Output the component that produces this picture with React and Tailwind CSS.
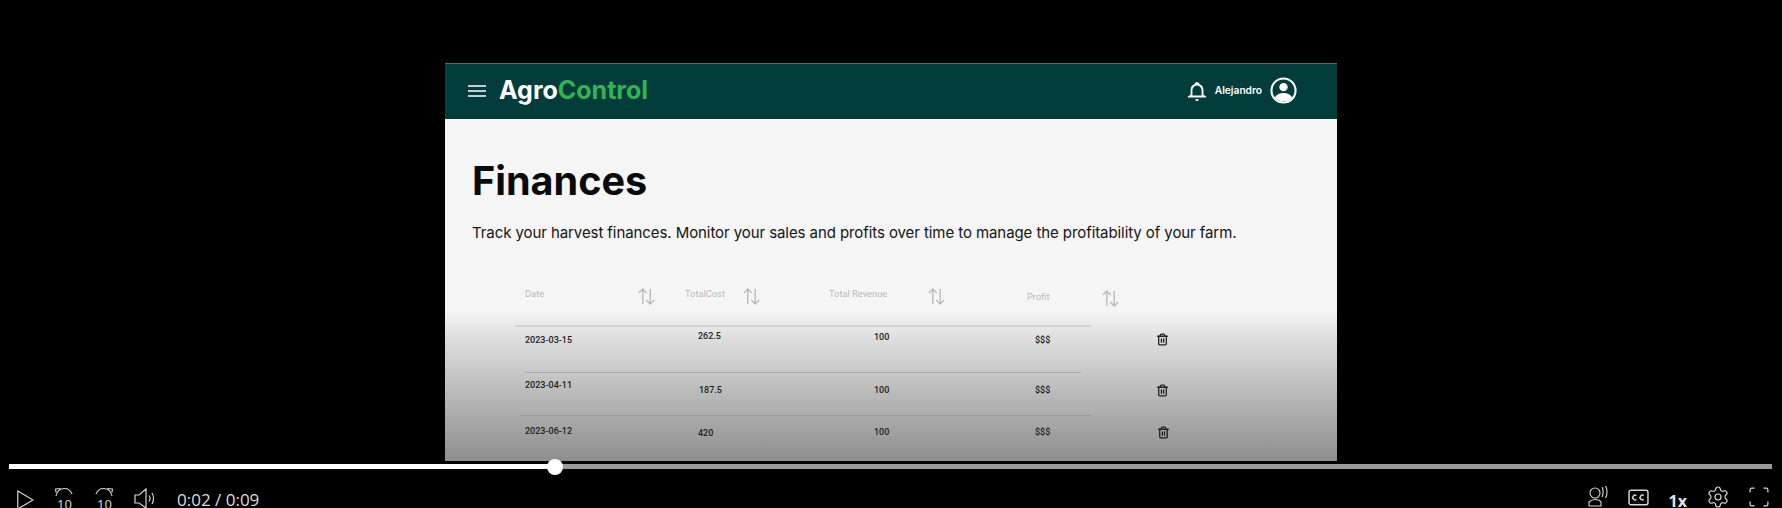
import React from "react";
import { Settings, Trash2 } from "lucide-react";

const Sort = ({ className = "" }) => (
  <svg viewBox="0 0 16 16" className={`w-[17px] h-[17px] shrink-0 text-[#b9b9b9] ${className}`} fill="none" stroke="currentColor" strokeWidth="1.3">
    <path d="M4.500 15V1M.8 4.800 4.500 1l3.700 3.800M11.500 1v14M7.800 11.200l3.700 3.800 3.700-3.800" />
  </svg>
);

const Trash = ({ className = "" }) => (
  <Trash2 className={`w-[13px] h-[15px] text-[#222] ${className}`} strokeWidth={2.4} />
);

const Cell = ({ className, children }) => (
  <div className={`text-[9px] leading-3 font-medium text-[#202020] shrink-0 [font-family:Roboto,sans-serif] ${className}`}>{children}</div>
);

const Replay = ({ flip }) => (
  <div className="relative w-[20px] h-[26px] shrink-0 text-[#cfcfcf]">
    <svg viewBox="0 0 20 12" className={`w-5 h-3 ${flip ? "-scale-x-100" : ""}`} fill="none" stroke="currentColor" strokeWidth="1.2">
      <path d="M2 9C3 3.500 7 1.500 10.500 1.500c3.500 0 6 2 7.500 5.500M1.500 1.500 2 5.500M1.500 2l5-.5" />
    </svg>
    <span className="absolute left-[3px] top-[8px] text-[13px] leading-[18px] [font-family:'Noto_Sans',sans-serif]">10</span>
  </div>
);

export default function App() {
  return (
    <div className="h-[508px] w-full overflow-hidden bg-black [font-family:Inter,sans-serif]">
      <div className="pt-[63px] pl-[445px]">
        <div className="w-[892px] h-[398px] flex flex-col">
          <header className="h-[56px] shrink-0 bg-[#033d3b] border-t border-[#4d6f6c] flex items-center pl-[23px] pr-[40px] pb-[2px] text-white">
            <svg viewBox="0 0 18 14" className="w-[18px] h-[14px]" fill="none" stroke="currentColor" strokeWidth="1.7">
              <path d="M0 2h18M0 7h18M0 12h18" />
            </svg>
            <div className="ml-[13px] text-[25px] font-bold leading-none">
              Agro<span className="text-[#35b256]">Control</span>
            </div>
            <svg viewBox="0 0 24 24" className="ml-auto w-[22px] h-[22px]" fill="currentColor">
              <path d="M12 23c1.100 0 2-.9 2-2h-4c0 1.100.9 2 2 2zm7-7v-5c0-3.070-1.630-5.640-4.500-6.320V4c0-.83-1.170-1.500-2.500-1.500S9.500 3.170 9.500 4v.68C6.640 5.360 5 7.920 5 11v5l-3 2v1h20v-1l-3-2zm-2 1H7v-6c0-2.480 2.510-5 5-5s5 2.520 5 5v6z" />
            </svg>
            <div className="ml-[7px] text-[10.200px] font-semibold">Alejandro</div>
            <svg viewBox="0 0 28 28" className="ml-[8px] w-[27px] h-[27px]">
              <circle cx="14" cy="14" r="12.500" fill="#033d3b" stroke="#fff" strokeWidth="2.200" />
              <circle cx="14" cy="10.500" r="4.300" fill="#fff" />
              <path d="M5 21c2-3 5-4.500 9-4.500s7 1.500 9 4.500c-2.200 3-5.500 4.500-9 4.500S7.200 24 5 21z" fill="#fff" />
            </svg>
          </header>
          <main className="flex-1 min-h-0 overflow-hidden bg-[linear-gradient(#f5f5f5_0%,#f5f5f5_56%,#dcdcdc_65%,#8e8e8e_100%)] text-black">
            <h1 className="ml-[27px] mt-[36px] text-[39.600px] leading-[52px] font-bold text-[#0a0a0a]">Finances</h1>
            <p className="ml-[27px] mt-[14px] text-[15px] leading-6 text-[#141414] tracking-[-0.08px]">
              Track your harvest finances. Monitor your sales and profits over time to manage the profitability of your farm.
            </p>
            <div className="ml-[70px] mt-[32px] w-[576px] h-[50px] border-b-2 border-[#d2d2d2] flex items-start text-[9.300px] leading-3 text-[#b9b9b9] [font-family:Roboto,sans-serif]">
              <span className="ml-[10px] mt-[11px] w-[113px] shrink-0">Date</span>
              <Sort className="mt-[11px]" />
              <span className="ml-[30px] mt-[11px] w-[58px] shrink-0">TotalCost</span>
              <Sort className="mt-[11px]" />
              <span className="ml-[69px] mt-[11px] w-[99px] shrink-0">Total Revenue</span>
              <Sort className="mt-[11px]" />
              <span className="ml-[82px] mt-[14px] w-[75px] shrink-0">Profit</span>
              <Sort className="mt-[13px]" />
            </div>
            <div className="ml-[80px] w-[556px] h-[46px] border-b border-[#ababab] flex items-start">
              <Cell className="w-[173px] mt-[7px]">2023-03-15</Cell>
              <Cell className="w-[176px] mt-[3px]">262.5</Cell>
              <Cell className="w-[161px] mt-[4px]">100</Cell>
              <Cell className="w-[121px] mt-[7px]">$$$</Cell>
              <Trash className="shrink-0 mt-[5px]" />
            </div>
            <div className="ml-[75px] w-[571px] h-[43px] border-b border-[#999] flex items-start pl-[5px]">
              <Cell className="w-[174px] mt-[6px]">2023-04-11</Cell>
              <Cell className="w-[175px] mt-[11px]">187.5</Cell>
              <Cell className="w-[161px] mt-[11px]">100</Cell>
              <Cell className="w-[121px] mt-[11px]">$$$</Cell>
              <Trash className="shrink-0 mt-[10px]" />
            </div>
            <div className="ml-[80px] flex items-start">
              <Cell className="w-[173px] mt-[9px]">2023-06-12</Cell>
              <Cell className="w-[176px] mt-[11px]">420</Cell>
              <Cell className="w-[161px] mt-[10px]">100</Cell>
              <Cell className="w-[122px] mt-[10px]">$$$</Cell>
              <Trash className="shrink-0 mt-[9px]" />
            </div>
          </main>
        </div>
      </div>
      <div className="relative mt-[3px] ml-[9px] w-[1763px] h-[5px] bg-[#9a9a9a]">
        <div className="h-full w-[546px] bg-white" />
        <div className="absolute left-[538px] -top-[5px] w-[16px] h-[16px] rounded-full bg-white" />
      </div>
      <div className="mt-[19px] flex items-start text-[#d6d6d6]">
        <svg viewBox="0 0 17 20" className="ml-[17px] mt-[2px] w-[17px] h-[20px] shrink-0" fill="none" stroke="currentColor" strokeWidth="1.2">
          <path d="M.8 1v18L16 10z" />
        </svg>
        <div className="ml-[20px] mt-[-1px]"><Replay /></div>
        <div className="ml-[20px] mt-[-1px]"><Replay flip /></div>
        <svg viewBox="0 0 22 22" className="ml-[20px] mt-[-1px] w-[22px] h-[22px] shrink-0" fill="none" stroke="currentColor" strokeWidth="1.200">
          <path d="M1 8v8h4l7 5V2L5 8zM15 8.500c1.200 1.700 1.200 4.300 0 6M18 6c2 3 2 8 0 11" />
        </svg>
        <span className="ml-[21px] mt-[0px] text-[17px] leading-6 text-[#dcdcdc] [font-family:'Open_Sans',sans-serif]">0:02 / 0:09</span>
        <svg viewBox="0 0 22 22" className="ml-auto -mt-[2px] w-[22px] h-[22px] shrink-0" fill="none" stroke="currentColor" strokeWidth="1.100">
          <circle cx="7" cy="7" r="5" />
          <path d="M14 1c1.500 2 1.500 7 0 10M17.500 0c2 3 2 9 0 12M1 16c2-2 4-2.500 6-2.500s5 1 6 2.500v4H1z" />
        </svg>
        <svg viewBox="0 0 20 16" className="ml-[18px] mt-[1px] w-[21px] h-[17px] shrink-0" fill="none" stroke="currentColor" strokeWidth="1.400">
          <rect x="1" y="1" width="18" height="14" rx="2" />
          <path d="M8 6.200a2.200 2.200 0 1 0 0 3.600M15 6.200a2.200 2.200 0 1 0 0 3.600" />
        </svg>
        <span className="ml-[20px] mt-[1px] text-[16px] leading-6 font-bold text-[#e4e4e4] [font-family:'Open_Sans',sans-serif]">1x</span>
        <Settings className="ml-[19px] -mt-[3px] w-[24px] h-[24px] shrink-0" strokeWidth={1.2} />
        <svg viewBox="0 0 18 18" className="ml-[19px] mr-[13px] -mt-[1px] w-[20px] h-[20px] shrink-0" fill="none" stroke="currentColor" strokeWidth="1.100">
          <path d="M1 5V2.500A1.500 1.500 0 0 1 2.500 1H5M13 1h2.500A1.500 1.500 0 0 1 17 2.500V5M17 13v2.500a1.500 1.500 0 0 1-1.500 1.500H13M5 17H2.500A1.500 1.500 0 0 1 1 15.500V13" />
        </svg>
      </div>
    </div>
  );
}
